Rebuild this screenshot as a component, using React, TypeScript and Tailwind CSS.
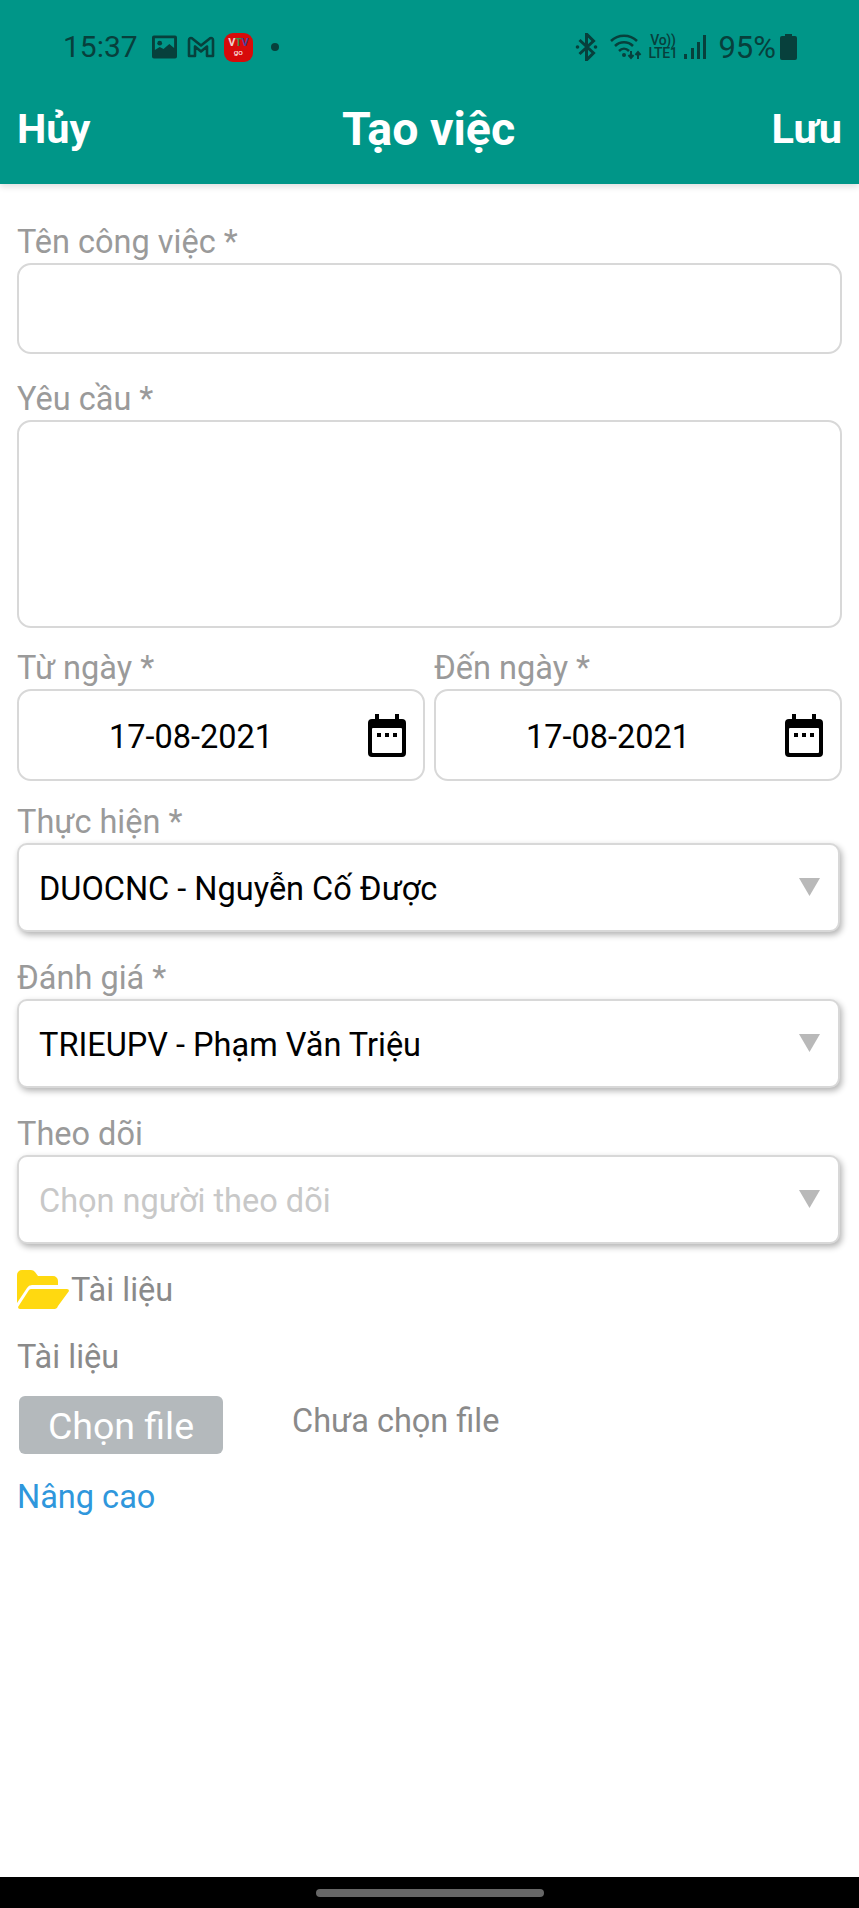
import React from "react";

const Cal = () => (
  <svg width="40" height="44" viewBox="0 0 40 44" className="shrink-0">
    <path d="M8 1h4v5h16V1h4v5h3a4 4 0 0 1 4 4v30a4 4 0 0 1-4 4H5a4 4 0 0 1-4-4V10a4 4 0 0 1 4-4h3z" fill="#000" />
    <rect x="5" y="15" width="30" height="25" rx="1" fill="#fff" />
    <rect x="10" y="20" width="4" height="4" fill="#000" />
    <rect x="18" y="20" width="4" height="4" fill="#000" />
    <rect x="26" y="20" width="4" height="4" fill="#000" />
  </svg>
);

const Label = ({ children, className = "" }: { children: React.ReactNode; className?: string }) => (
  <div className={`text-[32.500px] leading-[36px] text-[#9a9a9a] ${className}`}>{children}</div>
);

const DateField = ({ label }: { label: string }) => (
  <div className="flex-1 min-w-0">
    <Label className="mb-[3px]">{label}</Label>
    <div className="h-[92px] rounded-[14px] border-2 border-[#d8d8d8] flex items-center pl-[20px] pr-[16px]">
      <span className="flex-1 text-center text-[32.500px] leading-[40px] pt-[4px] pr-[24px] text-black">17-08-2021</span>
      <Cal />
    </div>
  </div>
);

const Select = ({ label, value, muted }: { label: string; value: string; muted?: boolean }) => (
  <div>
    <Label className="mb-[3px]">{label}</Label>
    <div className="h-[89px] mr-[2px] rounded-[10px] border-2 border-[#d8d8d8] bg-white shadow-[2px_3px_6px_rgba(0,0,0,0.3)] flex items-center justify-between pl-[20px] pr-[18px]">
      <span className={`text-[32.500px] leading-[40px] pt-[2px] ${muted ? "text-[#c8c8c8]" : "text-black"}`}>{value}</span>
      <svg width="21" height="18" viewBox="0 0 21 18" className="mb-[2px]"><path d="M0 0h21l-10.500 18z" fill="#b9b9b9" /></svg>
    </div>
  </div>
);

export default function App() {
  return (
    <div className="w-[859px] h-[1908px] flex flex-col bg-white [font-family:Roboto,sans-serif] overflow-hidden">
      <header className="h-[184px] shrink-0 bg-[#009688] shadow-[0_3px_6px_rgba(0,0,0,0.12)] z-10">
        <div className="h-[94px] flex items-center pl-[63px] pr-[62px] text-[#07403c]">
          <span className="text-[30px] leading-none">15:37</span>
          <svg width="25" height="24" viewBox="0 0 26 24" className="ml-[14px]">
            <path fillRule="evenodd" d="M2 0h22a2 2 0 0 1 2 2v20a2 2 0 0 1-2 2H2a2 2 0 0 1-2-2V2a2 2 0 0 1 2-2zM3 3v12l5-3 4 2 6-5 5 4V3z" fill="#07403c" />
            <circle cx="8" cy="8" r="2.500" fill="#07403c" />
          </svg>
          <svg width="28" height="22" viewBox="0 0 28 22" className="ml-[10px]">
            <path d="M2 20V4a2 2 0 0 1 3.200-1.600L14 9.500l8.800-7.100A2 2 0 0 1 26 4v16h-6V10.500l-6 5-6-5V20z" fill="none" stroke="#07403c" strokeWidth="2.600" strokeLinejoin="round" />
          </svg>
          <div className="ml-[9px] w-[29px] h-[29px] rounded-[9px] bg-[#d80a0a] flex flex-col items-center justify-center leading-none">
            <span className="text-[11px] font-bold leading-[12px] tracking-[-0.5px]">
              <span className="text-[#f0d0d0]">V</span>
              <span className="text-[#3c8f4a]">T</span>
              <span className="text-[#4a3f96]">V</span>
            </span>
            <span className="text-[8px] text-white leading-[8px]">go</span>
          </div>
          <span className="ml-[18px] w-[8px] h-[8px] rounded-full bg-[#07403c]" />
          <div className="flex-1" />
          <svg width="23" height="28" viewBox="0 0 22 28">
            <path d="M4 7l14 13-7 7V1l7 7L4 21" fill="none" stroke="#07403c" strokeWidth="3" />
            <circle cx="2" cy="14" r="1.800" fill="#07403c" />
            <circle cx="20" cy="14" r="1.800" fill="#07403c" />
          </svg>
          <svg width="32" height="26" viewBox="0 0 32 26" className="ml-[12px]">
            <path d="M1 7c7-7 19-7 26 0M5 12c5-5 13-5 18 0M9 17c3-3 7-3 10 0" fill="none" stroke="#07403c" strokeWidth="2.500" />
            <circle cx="14" cy="21" r="2" fill="#07403c" />
            <path d="M21 17v6M18.500 21l2.500 3 2.500-3M28 25v-6M25.500 21l2.500-3 2.500 3" fill="none" stroke="#07403c" strokeWidth="2" />
          </svg>
          <div className="ml-[5px] w-[31px] text-center font-medium text-[14px] leading-[13px] tracking-[-0.3px] whitespace-pre-line">
            {"Vo))\nLTE1"}
          </div>
          <svg width="22" height="26" viewBox="0 0 22 26" className="ml-[6px]">
            <rect x="0" y="20" width="3" height="5" fill="#07403c" />
            <rect x="7" y="14" width="3" height="11" fill="#07403c" />
            <rect x="13" y="8" width="3" height="17" fill="#07403c" />
            <rect x="19" y="1" width="3" height="24" fill="#07403c" />
          </svg>
          <span className="ml-[12px] text-[31px] leading-none">95%</span>
          <svg width="17" height="26" viewBox="0 0 17 26" className="ml-[4px]">
            <path d="M5 0h7v2h3a2 2 0 0 1 2 2v20a2 2 0 0 1-2 2H2a2 2 0 0 1-2-2V4a2 2 0 0 1 2-2h3z" fill="#07403c" />
          </svg>
        </div>
        <div className="h-[68px] flex items-center justify-between px-[17px] text-white font-bold pt-[2px]">
          <span className="text-[41.500px] leading-none">Hủy</span>
          <span className="text-[46.500px] leading-none pr-[5px]">Tạo việc</span>
          <span className="text-[41.500px] leading-none">Lưu</span>
        </div>
      </header>

      <main className="flex-1 px-[17px] pt-[40px]">
        <Label className="mb-[3px]">Tên công việc *</Label>
        <div className="h-[91px] rounded-[14px] border-2 border-[#d8d8d8]" />
        <Label className="mt-[27px] mb-[3px]">Yêu cầu *</Label>
        <div className="h-[208px] rounded-[14px] border-2 border-[#d8d8d8]" />
        <div className="mt-[22px] flex gap-[9px]">
          <DateField label="Từ ngày *" />
          <DateField label="Đến ngày *" />
        </div>
        <div className="mt-[23px] flex flex-col gap-[28px]">
          <Select label="Thực hiện *" value="DUOCNC - Nguyễn Cố Được" />
          <Select label="Đánh giá *" value="TRIEUPV - Phạm Văn Triệu" />
          <Select label="Theo dõi" value="Chọn người theo dõi" muted />
        </div>
        <div className="mt-[24px] h-[44px] flex items-center">
          <svg width="52" height="39" viewBox="0 0 52 39" className="shrink-0 -mt-[2px]">
            <path d="M0 5a5 5 0 0 1 5-5h9a5 5 0 0 1 4 2l3 4h15a5 5 0 0 1 5 5v4H15a6 6 0 0 0-5 3L0 33z" fill="#ffd910" />
            <path d="M1 37l11-17a3 3 0 0 1 3-1h35a2 2 0 0 1 2 2L41 36a4 4 0 0 1-3 3H3a2 2 0 0 1-2-2z" fill="#ffd910" />
          </svg>
          <span className="ml-[2px] text-[32.500px] text-[#8a8a8a]">Tài liệu</span>
        </div>
        <div className="mt-[27px] text-[32.500px] leading-[36px] text-[#8a8a8a]">Tài liệu</div>
        <div className="mt-[21px] flex items-start pl-[2px]">
          <div className="w-[204px] h-[58px] rounded-[6px] bg-[#b4b9bc] text-white text-[37.500px] leading-[60px] text-center">Chọn file</div>
          <span className="ml-[69px] text-[32.500px] leading-[50px] text-[#8a8a8a]">Chưa chọn file</span>
        </div>
        <div className="mt-[25px] text-[32.500px] leading-[36px] text-[#2f97dc]">Nâng cao</div>
      </main>

      <footer className="h-[31px] shrink-0 bg-black flex items-center justify-center">
        <div className="w-[228px] h-[8px] rounded-full bg-[#666666]" />
      </footer>
    </div>
  );
}
